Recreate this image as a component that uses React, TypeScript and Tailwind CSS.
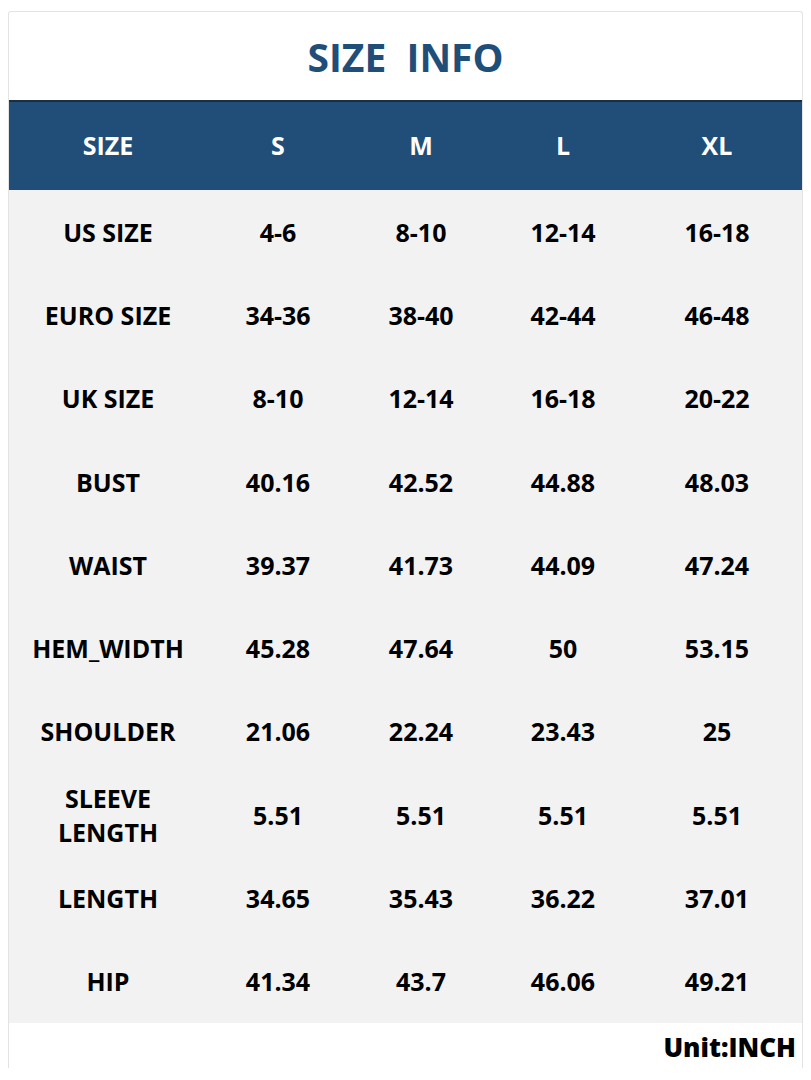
const columns = ["SIZE", "S", "M", "L", "XL"];

const rows: string[][] = [
  ["US SIZE", "4-6", "8-10", "12-14", "16-18"],
  ["EURO SIZE", "34-36", "38-40", "42-44", "46-48"],
  ["UK SIZE", "8-10", "12-14", "16-18", "20-22"],
  ["BUST", "40.16", "42.52", "44.88", "48.03"],
  ["WAIST", "39.37", "41.73", "44.09", "47.24"],
  ["HEM_WIDTH", "45.28", "47.64", "50", "53.15"],
  ["SHOULDER", "21.06", "22.24", "23.43", "25"],
  ["SLEEVE\nLENGTH", "5.51", "5.51", "5.51", "5.51"],
  ["LENGTH", "34.65", "35.43", "36.22", "37.01"],
  ["HIP", "41.34", "43.7", "46.06", "49.21"],
];

const gridCols = "grid grid-cols-[198px_142px_144px_140px_168px]";

export default function App() {
  return (
    <div className="min-h-[1080px] bg-white pt-[11px] pl-[8px] font-['Open_Sans',sans-serif]">
      <div className="h-[1057px] w-[795px] overflow-hidden rounded-t-[3px] border border-b-0 border-[#e3e3e3] bg-white">
        <div className="flex h-[88px] items-center justify-center">
          <h1 className="whitespace-pre text-[39px] leading-none font-bold text-[#1f4e79]">
            SIZE  INFO
          </h1>
        </div>

        <div
          className={`${gridCols} h-[90px] border-t-2 border-[#1b2d40] bg-[#204e78]`}
        >
          {columns.map((c) => (
            <div
              key={c}
              className="flex items-center justify-center text-[25px] font-bold text-white"
            >
              {c}
            </div>
          ))}
        </div>

        <div className="grid h-[833px] grid-rows-[repeat(10,1fr)] bg-[#f2f2f2]">
          {rows.map((row) => (
            <div key={row[0]} className={gridCols}>
              {row.map((cell, i) => (
                <div
                  key={i}
                  className="flex items-center justify-center whitespace-pre-line text-center text-[25px] leading-[34px] font-bold text-black"
                >
                  {cell}
                </div>
              ))}
            </div>
          ))}
        </div>

        <div className="flex h-[48px] items-center justify-end pr-[6px]">
          <span className="text-[26px] font-extrabold text-black">Unit:INCH</span>
        </div>
      </div>
    </div>
  );
}
